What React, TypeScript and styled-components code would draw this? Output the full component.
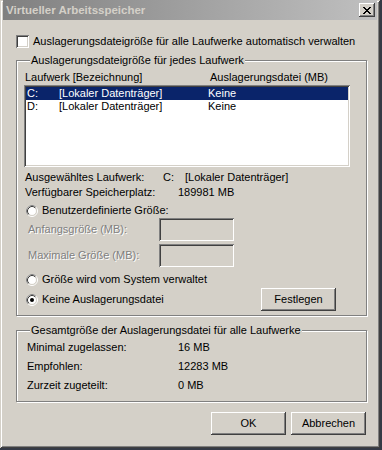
import React from "react";
import styled, { createGlobalStyle } from "styled-components";

const GlobalStyle = createGlobalStyle`
  html, body {
    margin: 0;
    padding: 0;
    background: #353a46;
  }
  body {
    font-family: "Liberation Sans", Arial, sans-serif;
    font-size: 11px;
    line-height: 13px;
    color: #000;
  }
`;

const raised = `
  box-shadow: inset -1px -1px #404040, inset 1px 1px #fff,
    inset -2px -2px #808080, inset 2px 2px #d4d0c8;
`;

const sunken = `
  box-shadow: inset 1px 1px #808080, inset -1px -1px #fff,
    inset 2px 2px #404040, inset -2px -2px #d4d0c8;
`;

const Window = styled.div`
  width: 380px;
  height: 448px;
  box-sizing: border-box;
  background: #d4d0c8;
  box-shadow: inset 1px 1px #d4d0c8, inset -1px -1px #404040,
    inset 2px 2px #fff, inset -2px -2px #808080;
  display: flex;
  flex-direction: column;
`;

const TitleBar = styled.div`
  height: 20px;
  margin: 0 3px;
  padding-left: 3px;
  display: flex;
  align-items: center;
  background: linear-gradient(to right, #808080, #c0c0c0);
`;

const Title = styled.span`
  font-weight: bold;
  font-size: 11.5px;
  color: #d4d0c8;
`;

const CloseBtn = styled.div`
  margin-left: auto;
  margin-right: 2px;
  width: 16px;
  height: 14px;
  background: #d4d0c8;
  display: flex;
  align-items: center;
  justify-content: center;
  ${raised}
`;

const Body = styled.div`
  padding: 15px 13px 0 16px;
  display: flex;
  flex-direction: column;
`;

const CheckRow = styled.label`
  display: flex;
  align-items: center;
  gap: 4px;
  height: 13px;
`;

const CheckBox = styled.span`
  width: 13px;
  height: 13px;
  background: #fff;
  ${sunken}
`;

const Group = styled.fieldset<{ $top: number; $bottom: number }>`
  margin: ${(p) => p.$top}px 0 0 0;
  padding: 0 7px ${(p) => p.$bottom}px 7px;
  border: 1px solid #808080;
  box-shadow: inset 1px 1px #fff, 1px 1px #fff;
  min-width: 0;
  display: flex;
  flex-direction: column;
`;

const Legend = styled.legend`
  margin-left: 6px;
  padding: 0 1px;
  line-height: 13px;
  background: #d4d0c8;
`;

const HeaderRow = styled.div`
  margin-top: 4px;
  padding-left: 1px;
  display: grid;
  grid-template-columns: 185px auto;
  height: 13px;
`;

const ListBox = styled.div`
  margin-top: 1px;
  width: 326px;
  height: 82px;
  box-sizing: border-box;
  padding: 2px;
  background: #fff;
  ${sunken}
`;

const ListRow = styled.div<{ $selected?: boolean }>`
  height: 13px;
  padding-left: 1px;
  display: grid;
  grid-template-columns: 32px 149px auto;
  background: ${(p) => (p.$selected ? "#0a246a" : "transparent")};
  color: ${(p) => (p.$selected ? "#fff" : "#000")};
  white-space: nowrap;
`;

const InfoRow = styled.div<{ $top: number; $label: number }>`
  margin-top: ${(p) => p.$top}px;
  padding-left: 1px;
  height: 13px;
  display: grid;
  grid-template-columns: ${(p) => p.$label}px auto;
  white-space: nowrap;
`;

const DriveValue = styled.span`
  display: grid;
  grid-template-columns: 22px auto;
`;

const RadioRow = styled.div<{ $top: number }>`
  margin-top: ${(p) => p.$top}px;
  padding-left: 2px;
  height: 13px;
  display: flex;
  align-items: center;
  gap: 4px;
  white-space: nowrap;
`;

const ActionRow = styled.div`
  margin-top: 2px;
  height: 23px;
  display: flex;
  align-items: center;
`;

const EditRow = styled.div<{ $top: number }>`
  margin-top: ${(p) => p.$top}px;
  padding-left: 4px;
  height: 23px;
  display: grid;
  grid-template-columns: 131px 75px;
  align-items: center;
`;

const DisabledLabel = styled.span`
  color: #808080;
  text-shadow: 1px 1px #fff;
  white-space: nowrap;
`;

const EditBox = styled.div`
  width: 75px;
  height: 23px;
  background: #d4d0c8;
  ${sunken}
`;

const PushButton = styled.button<{ $right?: number }>`
  width: 75px;
  height: 23px;
  margin-right: ${(p) => p.$right ?? 0}px;
  padding: 0;
  border: none;
  background: #d4d0c8;
  font: inherit;
  color: #000;
  ${raised}
`;

const SummaryRow = styled.div<{ $top: number }>`
  margin-top: ${(p) => p.$top}px;
  padding-left: 3px;
  height: 13px;
  display: grid;
  grid-template-columns: 151px auto;
`;

const Footer = styled.div`
  margin-top: 10px;
  padding-right: 1px;
  display: flex;
  justify-content: flex-end;
  gap: 5px;
`;

const Spacer = styled.span`
  flex: 1;
`;

const CloseGlyph = () => {
  const rows = [
    [0, 1, 6, 7],
    [1, 2, 5, 6],
    [2, 3, 4, 5],
    [3, 4],
    [2, 3, 4, 5],
    [1, 2, 5, 6],
    [0, 1, 6, 7],
  ];
  return (
    <svg width="8" height="7" viewBox="0 0 8 7" shapeRendering="crispEdges">
      {rows.map((xs, y) =>
        xs.map((x) => <rect key={`${x}-${y}`} x={x} y={y} width="1" height="1" fill="#000" />)
      )}
    </svg>
  );
};

const Radio = ({ checked }: { checked?: boolean }) => (
  <svg width="12" height="12" viewBox="0 0 12 12">
    <circle cx="6" cy="6" r="5.5" fill="none" stroke="#fff" />
    <path d="M2.11 9.89 A5.5 5.5 0 0 1 9.89 2.11" fill="none" stroke="#808080" />
    <circle cx="6" cy="6" r="4.5" fill="#fff" stroke="#d4d0c8" />
    <path d="M2.82 9.18 A4.5 4.5 0 0 1 9.18 2.82" fill="none" stroke="#404040" />
    {checked && <circle cx="6" cy="6" r="2" fill="#000" />}
  </svg>
);

const drives = [
  { letter: "C:", label: "[Lokaler Datenträger]", size: "Keine", selected: true },
  { letter: "D:", label: "[Lokaler Datenträger]", size: "Keine", selected: false },
];

const totals = [
  ["Minimal zugelassen:", "16 MB"],
  ["Empfohlen:", "12283 MB"],
  ["Zurzeit zugeteilt:", "0 MB"],
];

export default function App() {
  return (
    <>
      <GlobalStyle />
      <Window>
        <TitleBar>
          <Title>Virtueller Arbeitsspeicher</Title>
          <CloseBtn>
            <CloseGlyph />
          </CloseBtn>
        </TitleBar>
        <Body>
          <CheckRow>
            <CheckBox />
            <span>Auslagerungsdateigröße für alle Laufwerke automatisch verwalten</span>
          </CheckRow>

          <Group $top={6} $bottom={4}>
            <Legend>Auslagerungsdateigröße für jedes Laufwerk</Legend>
            <HeaderRow>
              <span>Laufwerk [Bezeichnung]</span>
              <span>Auslagerungsdatei (MB)</span>
            </HeaderRow>
            <ListBox>
              {drives.map((d) => (
                <ListRow key={d.letter} $selected={d.selected}>
                  <span>{d.letter}</span>
                  <span>{d.label}</span>
                  <span>{d.size}</span>
                </ListRow>
              ))}
            </ListBox>
            <InfoRow $top={4} $label={138}>
              <span>Ausgewähltes Laufwerk:</span>
              <DriveValue>
                <span>C:</span>
                <span>[Lokaler Datenträger]</span>
              </DriveValue>
            </InfoRow>
            <InfoRow $top={2} $label={153}>
              <span>Verfügbarer Speicherplatz:</span>
              <span>189981 MB</span>
            </InfoRow>
            <RadioRow $top={5}>
              <Radio />
              <span>Benutzerdefinierte Größe:</span>
            </RadioRow>
            <EditRow $top={1}>
              <DisabledLabel>Anfangsgröße (MB):</DisabledLabel>
              <EditBox />
            </EditRow>
            <EditRow $top={3}>
              <DisabledLabel>Maximale Größe (MB):</DisabledLabel>
              <EditBox />
            </EditRow>
            <RadioRow $top={6}>
              <Radio />
              <span>Größe wird vom System verwaltet</span>
            </RadioRow>
            <ActionRow>
              <RadioRow $top={0}>
                <Radio checked />
                <span>Keine Auslagerungsdatei</span>
              </RadioRow>
              <Spacer />
              <PushButton $right={23}>Festlegen</PushButton>
            </ActionRow>
          </Group>

          <Group $top={8} $bottom={9}>
            <Legend>Gesamtgröße der Auslagerungsdatei für alle Laufwerke</Legend>
            {totals.map(([label, value], i) => (
              <SummaryRow key={label} $top={i === 0 ? 4 : 6}>
                <span>{label}</span>
                <span>{value}</span>
              </SummaryRow>
            ))}
          </Group>

          <Footer>
            <PushButton>OK</PushButton>
            <PushButton>Abbrechen</PushButton>
          </Footer>
        </Body>
      </Window>
    </>
  );
}
